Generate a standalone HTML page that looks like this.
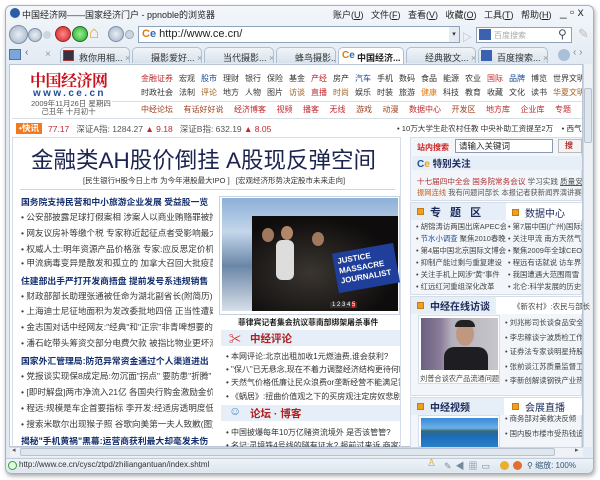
<!DOCTYPE html>
<html><head><meta charset="utf-8">
<style>
*{margin:0;padding:0;box-sizing:border-box}
body{width:600px;height:480px;background:#fff;font-family:"Liberation Sans","Noto Sans CJK SC",sans-serif;position:relative;overflow:hidden;font-size:11px;color:#333}
.a{position:absolute;white-space:nowrap}
#win{position:absolute;left:5px;top:5px;width:589px;height:469px;border:1px solid #9fb2c8;border-radius:6px;background:linear-gradient(#f3f7fb,#e2eaf3 60px);box-shadow:1px 2px 4px rgba(0,0,0,.35);overflow:hidden}
.menu{font-size:9px;color:#222}
.circ{position:absolute;border-radius:50%}
.tab{position:absolute;top:47px;height:16px;border:1px solid #aebfd2;border-bottom:none;border-radius:5px 5px 0 0;background:linear-gradient(#f0f4f8,#d8e2ec);font-size:9px;color:#333;padding:3px 0 0 18px;white-space:nowrap;overflow:hidden}
.nav{font-size:8px;color:#333;overflow:hidden}
.nav span{display:inline-block;margin-right:6px}
.nav3 span{margin-right:10.5px}
.r{color:#c0282d}.b{color:#1b4a96}
.lc div{position:absolute;left:21px;font-size:8.6px;color:#3a3a3a;white-space:nowrap;width:192px;overflow:hidden}
.lc .h{font-weight:bold;color:#16306e;font-size:8.8px}
.mc div{position:absolute;left:226px;font-size:8px;color:#333;white-space:nowrap;width:174px;overflow:hidden}
.rl div{position:absolute;font-size:7.4px;color:#444;white-space:nowrap;overflow:hidden}
.hdr{position:absolute;background:#e6eef7;height:16px}
.sq{display:inline-block;width:7px;height:7px;background:#f0a020;border:1px solid #c77a10;margin-right:6px;vertical-align:1px}
</style></head><body>
<div id="win"></div>
<!-- title bar -->
<div class="a" style="left:10px;top:8px;width:10px;height:10px;border-radius:50%;background:#2a5fa8"></div>
<div class="a" style="left:22px;top:8px;font-size:9px;color:#222">中国经济网——国家经济门户 - ppnoble的浏览器</div>
<div class="a menu" style="left:333px;top:8px">账户(<u>U</u>)&nbsp;&nbsp;&nbsp;文件(<u>F</u>)&nbsp;&nbsp;&nbsp;查看(<u>V</u>)&nbsp;&nbsp;&nbsp;收藏(<u>O</u>)&nbsp;&nbsp;&nbsp;工具(<u>T</u>)&nbsp;&nbsp;&nbsp;帮助(<u>H</u>)</div>
<div class="a" style="left:560px;top:5px;font-size:12px;color:#333">_ ▫ x</div>
<!-- nav buttons -->
<div class="circ" style="left:9px;top:25px;width:19px;height:19px;background:radial-gradient(#e8eef5,#9fb0c4);border:1px solid #7d8fa6"></div>
<div class="circ" style="left:28px;top:28px;width:14px;height:14px;background:radial-gradient(#e8eef5,#a9b8ca);border:1px solid #7d8fa6"></div>
<div class="circ" style="left:43px;top:31px;width:8px;height:8px;background:#cdd6e0"></div>
<div class="circ" style="left:55px;top:26px;width:16px;height:16px;background:radial-gradient(#f88,#c22);border:1px solid #922"></div>
<div class="circ" style="left:72px;top:26px;width:16px;height:16px;background:radial-gradient(#9e9,#2a2);border:1px solid #262"></div>
<div class="a" style="left:89px;top:23px;font-size:17px;color:#e8a020">⌂</div>
<div class="circ" style="left:108px;top:26px;width:16px;height:16px;background:radial-gradient(#e8eef5,#9fb0c4);border:1px solid #7d8fa6"></div>
<div class="circ" style="left:125px;top:30px;width:9px;height:9px;background:#cdd6e0;border:1px solid #9ab"></div>
<div class="a" style="left:138px;top:26px;width:322px;height:17px;background:#fff;border:1px solid #8ea3bb"></div>
<div class="a" style="left:142px;top:28px;font-size:11px;color:#222"><b style="color:#e07a10">C</b><b style="color:#2a6fc0">e</b> http://www.ce.cn/</div>
<div class="a" style="left:449px;top:27px;width:10px;height:15px;background:#e4ebf2;font-size:7px;text-align:center;padding-top:3px">▾</div>
<div class="a" style="left:462px;top:29px;font-size:10px;color:#aab">▷</div>
<div class="a" style="left:476px;top:27px;width:96px;height:16px;background:#fff;border:1px solid #8ea3bb"></div>
<div class="a" style="left:479px;top:29px;width:12px;height:11px;background:#3a62b0"></div>
<div class="a" style="left:494px;top:30px;font-size:8px;color:#aaa">百度搜索</div>
<div class="a" style="left:558px;top:27px;font-size:12px;color:#456">⚲</div>
<div class="a" style="left:578px;top:26px;font-size:13px;color:#bbb">✎</div>
<!-- tabs -->
<div class="a" style="left:9px;top:49px;width:12px;height:11px;background:#7aa6d8;border:1px solid #4a76a8"></div>
<div class="a" style="left:25px;top:47px;font-size:10px;color:#567">‹</div>
<div class="a" style="left:45px;top:49px;font-size:10px;color:#999">×</div>
<div class="tab" style="left:60px;width:70px">救你用相...<span style="color:#999"> ×</span></div>
<div class="a" style="left:63px;top:50px;width:11px;height:11px;background:#334;border:1px solid #a33"></div>
<div class="tab" style="left:132px;width:70px">摄影爱好...<span style="color:#999"> ×</span></div>
<div class="tab" style="left:204px;width:70px">当代摄影...<span style="color:#999"> ×</span></div>
<div class="tab" style="left:276px;width:60px">蜂鸟摄影...<span style="color:#999"> ×</span></div>
<div class="tab" style="left:338px;width:66px;background:#fff;font-weight:bold;color:#222;height:17px">中国经济...<span style="color:#999;font-weight:normal"> ×</span></div>
<div class="a" style="left:342px;top:50px;font-size:10px;font-weight:bold"><span style="color:#e07a10">C</span><span style="color:#2a6fc0">e</span></div>
<div class="tab" style="left:406px;width:70px">经典散文...<span style="color:#999"> ×</span></div>
<div class="tab" style="left:478px;width:70px">百度搜索...<span style="color:#999"> ×</span></div>
<div class="a" style="left:481px;top:50px;width:11px;height:11px;background:#3a62b0"></div>
<div class="circ" style="left:558px;top:49px;width:12px;height:12px;background:#aac0da"></div>
<div class="a" style="left:573px;top:47px;font-size:10px;color:#789">‹ ›</div>
<!-- page -->
<div class="a" style="left:9px;top:64px;width:574px;height:383px;background:#fff;border:1px solid #b8c6d6"></div>
<div class="a" style="left:583px;top:64px;width:9px;height:383px;background:#eef2f6;border-left:1px solid #cdd6e0"></div>
<div class="a" style="left:584px;top:88px;width:8px;height:55px;background:#dfe6ee;border:1px solid #b6c2d0;border-radius:2px"></div>
<!-- logo -->
<div class="a" style="left:30px;top:68px;font-size:16px;font-weight:bold;color:#c8141e;font-family:'Noto Serif CJK SC',serif;letter-spacing:-0.5px">中国经济网</div>
<div class="a" style="left:33px;top:88px;font-size:10px;font-weight:bold;color:#1f4e9a;letter-spacing:2.4px">www.ce.cn</div>
<div class="a" style="left:31px;top:100px;font-size:7.5px;color:#555;line-height:8px;text-align:center;width:75px">2009年11月26日 星期四<br>己丑年 十月初十</div>
<div class="a nav" style="left:141px;top:73px;width:441px"><span class="r">金融证券</span><span>宏观</span><span class="b">股市</span><span>理财</span><span>银行</span><span>保险</span><span>基金</span><span class="r">产经</span><span>房产</span><span class="b">汽车</span><span>手机</span><span>数码</span><span>食品</span><span>能源</span><span>农业</span><span class="r">国际</span><span class="b">品牌</span><span>博览</span><span>世界文明</span></div>
<div class="a nav" style="left:141px;top:87px;width:441px"><span>时政社会</span><span>法制</span><span style="color:#a06020">评论</span><span>地方</span><span>人物</span><span>图片</span><span style="color:#a06020">访谈</span><span class="r">直播</span><span style="color:#a06020">时尚</span><span>娱乐</span><span>时装</span><span>旅游</span><span style="color:#e07a10">健康</span><span>科技</span><span>教育</span><span>收藏</span><span>文化</span><span>读书</span><span style="color:#a06020">华夏文明</span></div>
<div class="a" style="left:112px;top:101px;width:470px;border-top:1px solid #d8dee6"></div>
<div class="a nav nav3" style="left:141px;top:104px;width:441px"><span style="color:#a04020">中经论坛</span><span style="color:#a04020">有话好好说</span><span class="r">经济博客</span><span class="r">视频</span><span class="r">播客</span><span class="r">无线</span><span style="color:#a04020">游戏</span><span style="color:#a04020">动漫</span><span class="r">数据中心</span><span style="color:#a04020">开发区</span><span class="r">地方库</span><span class="r">企业库</span><span class="r">专题</span><span class="r">周刊</span><span>RSS</span></div>
<div class="a" style="left:12px;top:118px;width:570px;border-top:1px solid #d8dee6"></div>
<!-- ticker -->
<div class="a" style="left:16px;top:123px;width:26px;height:11px;background:#f07a20;color:#fff;font-size:8.5px;font-weight:bold;text-align:center;line-height:11px">•快讯</div>
<div class="a" style="left:48px;top:123px;font-size:8.5px;color:#555"><span class="r">77.17</span>&nbsp;&nbsp;&nbsp;深证A指: 1284.27 <span class="r">▲ 9.18</span>&nbsp;&nbsp;&nbsp;深证B指: 632.19 <span class="r">▲ 8.05</span></div>
<div class="a" style="left:397px;top:123px;font-size:7.6px;color:#333">• 10万大学生赴农村任教 中央补助工资提至2万&nbsp;&nbsp;&nbsp;&nbsp;• 西气</div>
<!-- main box -->
<div class="a" style="left:12px;top:137px;width:389px;height:310px;border:1px solid #d4dde8;border-bottom:none"></div>
<div class="a" style="left:31px;top:143px;font-size:22.5px;color:#1c2450">金融类AH股价倒挂 A股现反弹空间</div>
<div class="a" style="left:83px;top:175px;font-size:7.5px;color:#333">[民生银行H股今日上市 为今年港股最大IPO ]&nbsp;&nbsp;&nbsp;[宏观经济形势决定股市未来走向]</div>
<div class="a" style="left:20px;top:189px;width:375px;border-top:1px solid #ccd6e2"></div>
<div class="lc">
<div class="h" style="top:195px">国务院支持民营和中小旅游企业发展 受益股一览</div>
<div style="top:211px">• 公安部披露足球打假案相 涉案人以商业贿赂罪被拘</div>
<div style="top:227px">• 网友议房补等缴个税 专家称近起征点者受影响最大</div>
<div style="top:243px">• 权威人士:明年资源产品价格涨 专家:应反思定价机制</div>
<div style="top:257px">• 甲流病毒变异是散发和孤立的 加拿大召回大批疫苗</div>
<div class="h" style="top:274px">住建部出手严打开发商捂盘 提前发号系违规销售</div>
<div style="top:290px">• 财政部部长助理张通被任命为湖北副省长(附简历)</div>
<div style="top:305px">• 上海迪士尼征地面积为发改委批地四倍 正当性遭疑</div>
<div style="top:321px">• 金志国对话中经网友:"经典"和"正宗"非青啤想要的</div>
<div style="top:337px">• 潘石屹带头筹资交部分电费欠款 被指比物业更坏滑</div>
<div class="h" style="top:354px">国家外汇管理局:防范异常资金通过个人渠道进出</div>
<div style="top:370px">• 党报谈实现保8成定局:勿沉面"拐点" 要防患"折腾"</div>
<div style="top:386px">• [即时解盘]两市净流入21亿 各国央行购金激励金价</div>
<div style="top:402px">• 程远:规模是车企首要指标 李开发:经适房透明度低</div>
<div style="top:418px">• 搜索米歇尔出现猴子照 谷歌向美第一夫人致歉(图)</div>
<div class="h" style="top:434px">揭秘"手机黄祸"黑幕:运营商获利最大却毫发未伤</div>
</div>
<!-- photo -->
<div class="a" style="left:219px;top:196px;width:181px;height:119px;border:1px solid #c8d2de"></div>
<div class="a" style="left:222px;top:198px;width:176px;height:113px;background:linear-gradient(180deg,#8cb0d8 0%,#c4d6ea 30%,#6a86a8 60%,#d8e0e8 100%)"></div>
<div class="a" style="left:252px;top:216px;width:146px;height:95px;background:radial-gradient(ellipse at 40% 60%,#3a3530,#0e0c0c 70%)"></div>
<div class="a" style="left:276px;top:240px;width:18px;height:40px;background:#ddd;border-radius:6px"></div>
<div class="circ" style="left:262px;top:228px;width:12px;height:14px;background:#a07860"></div>
<div class="circ" style="left:281px;top:226px;width:12px;height:14px;background:#b08868"></div>
<div class="circ" style="left:312px;top:232px;width:12px;height:14px;background:#a07860"></div>
<div class="a" style="left:335px;top:248px;width:62px;height:40px;background:#1f3f9a;transform:rotate(-10deg);color:#fff;font-size:8px;font-weight:bold;line-height:10px;padding:4px">JUSTICE<br>MASSACRE<br>JOURNALIST</div>
<div class="a" style="left:330px;top:302px;font-size:6px;color:#fff;background:#333;padding:0 2px">1 2 3 4 <span style="background:#c22">5</span></div>
<div class="a" style="left:238px;top:317px;font-size:7.8px;font-weight:bold;color:#222">菲律宾记者集会抗议菲南部绑架屠杀事件</div>
<!-- 中经评论 -->
<div class="hdr" style="left:221px;top:330px;width:179px"></div>
<div class="a" style="left:229px;top:330px;font-size:12px;color:#c22">✂</div>
<div class="a" style="left:250px;top:331px;font-size:10.5px;font-weight:bold;color:#b02020">中经评论</div>
<div class="mc">
<div style="top:351px">• 本网评论:北京出租加收1元燃油费,谁会获利?</div>
<div style="top:364px">• "保八"已无悬念,现在不着力调整经济结构更待何时!</div>
<div style="top:377px">• 天然气价格低廉让民众浪费or垄断经营不能满足需求?</div>
<div style="top:391px">• 《蜗居》:扭曲价值观之下的买房观注定房奴悲剧性结局</div>
</div>
<div class="hdr" style="left:221px;top:405px;width:179px"></div>
<div class="a" style="left:229px;top:404px;font-size:12px;color:#4a8ac8">☺</div>
<div class="a" style="left:250px;top:406px;font-size:10.5px;font-weight:bold;color:#b02020">论坛 · 博客</div>
<div class="mc">
<div style="top:427px">• 中国披爆每年10万亿赌资流境外 是否该管管?</div>
<div style="top:440px">• 名记:灵境铁4号线的隧有证水? 报前过来诉 商家有才</div>
</div>
<!-- right column -->
<div class="a" style="left:410px;top:137px;width:172px;height:64px;background:#f2f6fa;border:1px solid #d4dde8"></div>
<div class="a" style="left:417px;top:142px;font-size:8px;font-weight:bold;color:#c22">站内搜索</div>
<div class="a" style="left:455px;top:139px;width:98px;height:14px;background:#fff;border:1px solid #8a9bb0;font-size:8.5px;padding-left:3px;color:#222">请输入关键词</div>
<div class="a" style="left:558px;top:139px;width:24px;height:14px;background:#f4f4f4;border:1px solid #bbb;font-size:8px;color:#a33;font-weight:bold;padding-left:6px">搜</div>
<div class="a" style="left:412px;top:156px;width:170px;height:14px;background:#e6eef7"></div>
<div class="a" style="left:417px;top:156px;font-size:10px;font-weight:bold"><span style="color:#1f4e9a">C</span><span style="color:#e8a020">e</span> <span style="color:#1c2a5a;font-size:9.5px">特别关注</span></div>
<div class="a" style="left:417px;top:176px;font-size:7.6px;color:#555;width:165px;overflow:hidden"><span style="color:#b03030">十七届四中全会</span> <span style="color:#b03030">国务院常务会议</span> 学习实践 <u>质量安全</u></div>
<div class="a" style="left:417px;top:188px;font-size:7.3px;color:#555;width:165px;overflow:hidden"><span style="color:#c06020">振网连线</span> 我有问题问部长 本报记者获新闻界演讲赛</div>
<div class="a" style="left:410px;top:202px;width:172px;height:93px;background:#f2f6fa;border:1px solid #d4dde8"></div>
<div class="a" style="left:411px;top:203px;width:95px;height:17px;background:#e6eef7"></div>
<div class="a" style="left:506px;top:203px;width:76px;height:17px;background:#fff"></div>
<div class="a" style="left:417px;top:204px;font-size:11px;font-weight:bold;color:#1c2a5a;letter-spacing:3px"><span class="sq"></span>专 题 区</div>
<div class="a" style="left:512px;top:205px;font-size:10px;color:#1c2a5a"><span class="sq"></span>数据中心</div>
<div class="rl">
<div style="left:416px;top:221px;width:90px">• 胡锦涛访两国出席APEC会</div>
<div style="left:416px;top:233px;width:90px">• <span class="b">节水小调查</span> 聚焦2010春晚</div>
<div style="left:416px;top:245px;width:90px">• 第4届中国北京国际文博会</div>
<div style="left:416px;top:257px;width:90px">• 抑制产能过剩与重复建设</div>
<div style="left:416px;top:269px;width:90px">• 关注手机上网涉"黄"事件</div>
<div style="left:416px;top:281px;width:90px">• 红远红河重组深化改革</div>
<div style="left:508px;top:221px;width:74px">• 第7届中国(广州)国际汽</div>
<div style="left:508px;top:233px;width:74px">• 关注甲流 南方天然气</div>
<div style="left:508px;top:245px;width:74px">• 聚焦2009年全球CEO年会</div>
<div style="left:508px;top:257px;width:74px">• 程远有话就说 访车界</div>
<div style="left:508px;top:269px;width:74px">• 我国遭遇大范围雨雪</div>
<div style="left:508px;top:281px;width:74px">• 北仑:科学发展的历史</div>
</div>
<div class="a" style="left:410px;top:296px;width:172px;height:100px;background:#f2f6fa;border:1px solid #d4dde8"></div>
<div class="a" style="left:411px;top:297px;width:85px;height:17px;background:#e6eef7"></div>
<div class="a" style="left:496px;top:297px;width:86px;height:17px;background:#fff"></div>
<div class="a" style="left:417px;top:298px;font-size:10px;font-weight:bold;color:#1c2a5a"><span class="sq"></span>中经在线访谈</div>
<div class="a" style="left:513px;top:301px;font-size:7.5px;color:#444">《新农村》:农民与部长</div>
<div class="a" style="left:418px;top:315px;width:82px;height:69px;background:#fff;border:1px solid #d4dde8"></div>
<div class="a" style="left:421px;top:318px;width:77px;height:52px;background:linear-gradient(90deg,#6a6080 0%,#8a7c98 25%,#b4b0bc 40%,#c8c6cc 100%)"></div>
<div class="a" style="left:444px;top:347px;width:44px;height:23px;background:#1e1e22;border-radius:10px 10px 0 0"></div>
<div class="circ" style="left:456px;top:322px;width:18px;height:24px;background:#c09880"></div>
<div class="a" style="left:455px;top:320px;width:20px;height:7px;background:#222;border-radius:8px 8px 0 0"></div>
<div class="a" style="left:420px;top:374px;font-size:7.2px;color:#444">刘普合谈农产品流通问题</div>
<div class="rl">
<div style="left:505px;top:317px;width:77px">• 刘兆彬司长谈食品安全</div>
<div style="left:505px;top:332px;width:77px">• 李忠稼谈宁波质检工作</div>
<div style="left:505px;top:346px;width:77px">• 证券法专家谈明星持股</div>
<div style="left:505px;top:361px;width:77px">• 张前谈江苏质量监督工</div>
<div style="left:505px;top:375px;width:77px">• 李新创解读钢铁产业热</div>
</div>
<div class="a" style="left:410px;top:397px;width:172px;height:50px;background:#f2f6fa;border:1px solid #d4dde8;border-bottom:none"></div>
<div class="a" style="left:411px;top:398px;width:93px;height:17px;background:#e6eef7"></div>
<div class="a" style="left:504px;top:398px;width:78px;height:17px;background:#fff"></div>
<div class="a" style="left:417px;top:399px;font-size:10px;font-weight:bold;color:#1c2a5a"><span class="sq"></span>中经视频</div>
<div class="a" style="left:512px;top:399px;font-size:10px;color:#1c2a5a"><span class="sq"></span>会展直播</div>
<div class="a" style="left:418px;top:415px;width:82px;height:32px;background:#fff;border:1px solid #d4dde8"></div>
<div class="a" style="left:421px;top:418px;width:77px;height:29px;background:linear-gradient(180deg,#3a8ad8 0%,#6ab0e8 35%,#3a6a70 45%,#1a6ab8 60%,#2a80c8 100%)"></div>
<div class="rl">
<div style="left:505px;top:413px;width:77px">• 商务部对美救决反倾</div>
<div style="left:505px;top:428px;width:77px">• 国内股市楼市受热钱追</div>
</div>
<!-- h scrollbar -->
<div class="a" style="left:10px;top:447px;width:573px;height:10px;background:#eef2f6;border-top:1px solid #cdd6e0"></div>
<div class="a" style="left:20px;top:448px;width:535px;height:8px;background:#dfe6ee;border:1px solid #b6c2d0;border-radius:2px"></div>
<div class="a" style="left:12px;top:446px;font-size:7px;color:#555">◂</div>
<div class="a" style="left:575px;top:446px;font-size:7px;color:#555">▸</div>
<!-- status -->
<div class="a" style="left:6px;top:458px;width:587px;height:14px;background:linear-gradient(#eef3f8,#dde6ef);border-top:1px solid #c0ccd8;border-radius:0 0 6px 6px"></div>
<div class="circ" style="left:8px;top:461px;width:9px;height:9px;border:1px solid #3a9a3a;background:#dfd"></div>
<div class="a" style="left:19px;top:460px;font-size:8px;color:#333">http://www.ce.cn/cysc/ztpd/zhiliangantuan/index.shtml</div>
<div class="a" style="left:427px;top:458px;font-size:10px;color:#d9a030">♙</div>
<div class="a" style="left:444px;top:459px;font-size:9px;color:#789;letter-spacing:4px">✎◀▦▭</div>
<div class="circ" style="left:500px;top:461px;width:9px;height:9px;background:#e8b030"></div>
<div class="circ" style="left:513px;top:461px;width:9px;height:9px;background:#e07030"></div>
<div class="a" style="left:527px;top:460px;font-size:8px;color:#357">⚲ 缩放: 100%</div>
</body></html>
